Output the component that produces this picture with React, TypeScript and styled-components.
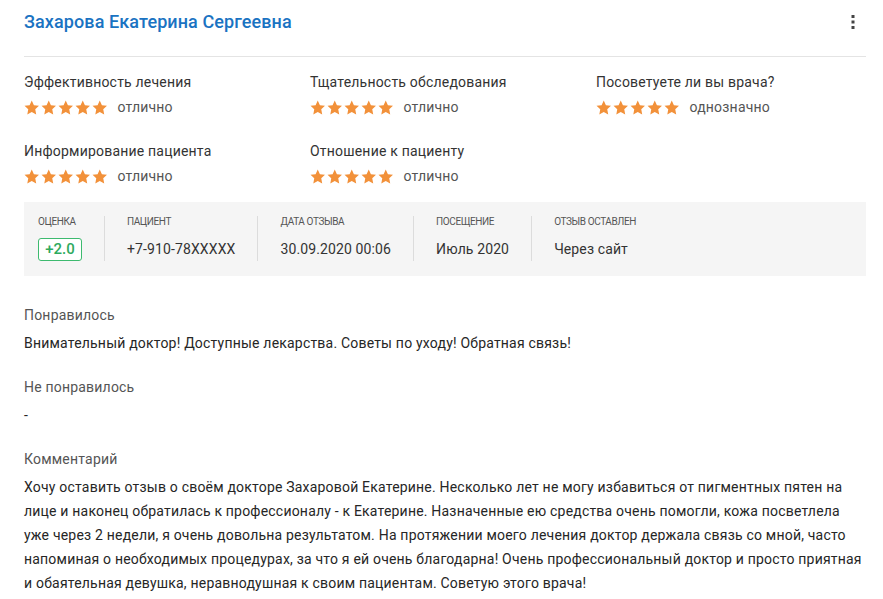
import React from "react";
import styled, { createGlobalStyle } from "styled-components";

const Global = createGlobalStyle`
  html, body { margin: 0; padding: 0; background: #fff; }
  body { font-family: Roboto, "Noto Sans", Arial, sans-serif; color: #333; }
  * { box-sizing: border-box; }
`;

const Page = styled.div`
  padding: 0 17px 20px 24px;
  width: 883px;
`;

const Header = styled.header`
  display: flex;
  align-items: center;
  justify-content: space-between;
  padding-top: 10px;
  padding-bottom: 22px;
  border-bottom: 1px solid #e4e4e4;
`;

const Title = styled.h1`
  margin: 0;
  font-size: 18px;
  line-height: 24px;
  font-weight: 500;
  letter-spacing: 0.1px;
  color: #1a73c2;
`;

const MenuButton = styled.button`
  border: 0;
  background: none;
  padding: 0;
  margin-right: 10px;
  width: 6px;
  height: 24px;
  display: flex;
  align-items: center;
  justify-content: center;
  cursor: pointer;
`;

const Criteria = styled.div`
  display: grid;
  grid-template-columns: 286px 286px 270px;
  row-gap: 24px;
  margin-top: 15px;
`;

const Criterion = styled.div`
  display: flex;
  flex-direction: column;
  gap: 5px;
`;

const CriterionLabel = styled.div`
  font-size: 14px;
  line-height: 20px;
  letter-spacing: 0.2px;
  color: #333;
`;

const RatingRow = styled.div`
  display: flex;
  align-items: center;
  height: 20px;
  gap: 10px;
`;

const Stars = styled.div`
  display: flex;
  gap: 1.5px;
`;

const RatingWord = styled.span`
  font-size: 14px;
  line-height: 20px;
  letter-spacing: 0.2px;
  color: #555;
`;

const InfoBox = styled.div`
  margin-top: 16px;
  background: #f5f5f5;
  display: flex;
  padding: 14px 14px 15px;
`;

const InfoItem = styled.div<{ $first?: boolean }>`
  display: flex;
  flex-direction: column;
  gap: 10px;
  padding: 0 22px 0 ${(p) => (p.$first ? "0" : "22px")};
  border-left: ${(p) => (p.$first ? "none" : "1px solid #dcdcdc")};
`;

const InfoLabel = styled.div`
  font-size: 10px;
  line-height: 12px;
  letter-spacing: -0.4px;
  color: #555;
  text-transform: uppercase;
  white-space: nowrap;
`;

const InfoValue = styled.div`
  font-size: 14px;
  line-height: 23px;
  height: 23px;
  letter-spacing: 0.12px;
  color: #333;
  display: flex;
  align-items: center;
  white-space: nowrap;
`;

const Badge = styled.span`
  display: inline-flex;
  align-items: center;
  justify-content: center;
  width: 44px;
  height: 23px;
  border: 1px solid #3dba6f;
  border-radius: 3px;
  color: #2eaa5e;
  font-size: 15px;
  font-weight: 500;
  letter-spacing: 0;
  background: #fff;
`;

const Section = styled.section`
  margin-top: 29px;
  & + & { margin-top: 22px; }
`;

const SectionLabel = styled.div`
  font-size: 14px;
  line-height: 20px;
  letter-spacing: 0.2px;
  color: #555;
  margin-bottom: 6px;
`;

const SectionText = styled.p`
  margin: 0;
  font-size: 14px;
  line-height: 24px;
  letter-spacing: 0.2px;
  color: #262626;
`;

const Star = () => (
  <svg width="15.5" height="15" viewBox="0 0 24 23" aria-hidden>
    <path
      d="M12 0.8l3.35 7.2 7.85.95-5.8 5.45 1.5 7.8L12 18.35 5.1 22.2l1.5-7.8L.8 8.95 8.65 8z"
      fill="#f2913a"
    />
  </svg>
);

const criteria = [
  { label: "Эффективность лечения", word: "отлично" },
  { label: "Тщательность обследования", word: "отлично" },
  { label: "Посоветуете ли вы врача?", word: "однозначно" },
  { label: "Информирование пациента", word: "отлично" },
  { label: "Отношение к пациенту", word: "отлично" },
];

const info = [
  { label: "Пациент", value: "+7-910-78XXXXX" },
  { label: "Дата отзыва", value: "30.09.2020 00:06" },
  { label: "Посещение", value: "Июль 2020" },
  { label: "Отзыв оставлен", value: "Через сайт" },
];

export default function App() {
  return (
    <Page>
      <Global />
      <Header>
        <Title>Захарова Екатерина Сергеевна</Title>
        <MenuButton aria-label="Меню">
          <svg width="4" height="16" viewBox="0 0 4 16">
            <rect x="0.5" y="1" width="3" height="3" fill="#444" />
            <rect x="0.5" y="6.5" width="3" height="3" fill="#444" />
            <rect x="0.5" y="12" width="3" height="3" fill="#444" />
          </svg>
        </MenuButton>
      </Header>

      <Criteria>
        {criteria.map((c) => (
          <Criterion key={c.label}>
            <CriterionLabel>{c.label}</CriterionLabel>
            <RatingRow>
              <Stars>
                {[0, 1, 2, 3, 4].map((i) => (
                  <Star key={i} />
                ))}
              </Stars>
              <RatingWord>{c.word}</RatingWord>
            </RatingRow>
          </Criterion>
        ))}
      </Criteria>

      <InfoBox>
        <InfoItem $first>
          <InfoLabel>Оценка</InfoLabel>
          <InfoValue>
            <Badge>+2.0</Badge>
          </InfoValue>
        </InfoItem>
        {info.map((i) => (
          <InfoItem key={i.label}>
            <InfoLabel>{i.label}</InfoLabel>
            <InfoValue>{i.value}</InfoValue>
          </InfoItem>
        ))}
      </InfoBox>

      <Section>
        <SectionLabel>Понравилось</SectionLabel>
        <SectionText>Внимательный доктор! Доступные лекарства. Советы по уходу! Обратная связь!</SectionText>
      </Section>
      <Section>
        <SectionLabel>Не понравилось</SectionLabel>
        <SectionText>-</SectionText>
      </Section>
      <Section>
        <SectionLabel>Комментарий</SectionLabel>
        <SectionText>
          Хочу оставить отзыв о своём докторе Захаровой Екатерине. Несколько лет не могу избавиться от пигментных пятен на лице и наконец обратилась к профессионалу - к Екатерине. Назначенные ею средства очень помогли, кожа посветлела уже через 2 недели, я очень довольна результатом. На протяжении моего лечения доктор держала связь со мной, часто напоминая о необходимых процедурах, за что я ей очень благодарна! Очень профессиональный доктор и просто приятная и обаятельная девушка, неравнодушная к своим пациентам. Советую этого врача!
        </SectionText>
      </Section>
    </Page>
  );
}
